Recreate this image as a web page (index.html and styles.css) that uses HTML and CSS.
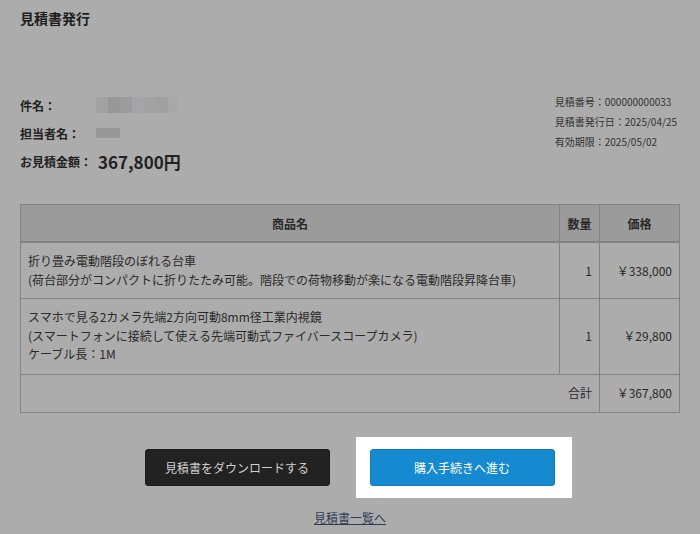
FILE: index.html
```html
<!DOCTYPE html>
<html lang="ja">
<head>
<meta charset="utf-8">
<link rel="stylesheet" href="styles.css">
</head>
<body>
<div class="page">
  <h1 class="title">見積書発行</h1>
  <div class="info">
    <div class="info-left">
      <div class="row"><span class="label">件名：</span><span class="mosaic m1"><i></i><i></i><i></i><i></i><i></i><i></i><i></i></span></div>
      <div class="row"><span class="label">担当者名：</span><span class="mosaic m2"><i></i><i></i></span></div>
      <div class="row"><span class="label">お見積金額：</span><span class="amount">367,800円</span></div>
    </div>
    <div class="info-right">
      <div>見積番号：000000000033</div>
      <div>見積書発行日：2025/04/25</div>
      <div>有効期限：2025/05/02</div>
    </div>
  </div>
  <table class="items">
    <thead>
      <tr><th class="c-name">商品名</th><th class="c-qty">数量</th><th class="c-price">価格</th></tr>
    </thead>
    <tbody>
      <tr class="r1">
        <td>折り畳み電動階段のぼれる台車<br>(荷台部分がコンパクトに折りたたみ可能。階段での荷物移動が楽になる電動階段昇降台車)</td>
        <td class="num">1</td>
        <td class="num">￥338,000</td>
      </tr>
      <tr class="r2">
        <td>スマホで見る2カメラ先端2方向可動8mm径工業内視鏡<br>(スマートフォンに接続して使える先端可動式ファイバースコープカメラ)<br>ケーブル長：1M</td>
        <td class="num">1</td>
        <td class="num">￥29,800</td>
      </tr>
      <tr class="total">
        <td colspan="2" class="num">合計</td>
        <td class="num">￥367,800</td>
      </tr>
    </tbody>
  </table>
  <div class="actions">
    <button class="btn btn-dark">見積書をダウンロードする</button>
    <div class="spot"><button class="btn btn-blue">購入手続きへ進む</button></div>
  </div>
  <div class="link-wrap"><a class="back" href="#">見積書一覧へ</a></div>
</div>
</body>
</html>
```
FILE: styles.css
```css
html, body {
  margin: 0;
  padding: 0;
  background: #acacac;
  font-family: "Noto Sans CJK JP", "Noto Sans", sans-serif;
  color: #222;
}
.page {
  padding: 8px 20px 0 20px;
}
.title {
  margin: 0;
  font-size: 14px;
  font-weight: bold;
  line-height: 20px;
  color: #1e1e1e;
}
.info {
  display: flex;
  justify-content: space-between;
  margin-top: 63px;
}
.info-left .row {
  display: flex;
  align-items: center;
  height: 28px;
  font-size: 12px;
  font-weight: bold;
}
.label {
  width: 78px;
}
.mosaic {
  display: flex;
  margin-left: -2px;
}
.mosaic i {
  display: block;
  width: 12px;
  height: 16px;
  background: #9e9e9e;
}
.m1 i:nth-child(1) { background: #a2a2a2; }
.m1 i:nth-child(2) { background: #979797; }
.m1 i:nth-child(3) { background: #9c9c9c; }
.m1 i:nth-child(4) { background: #a5a5a7; }
.m1 i:nth-child(5) { background: #a2a2a2; }
.m1 i:nth-child(6) { background: #a0a0a0; }
.m1 i:nth-child(7) { background: #a8a8a8; width: 10px; }
.m2 i { height: 10px; background: #979797; }
.amount {
  font-size: 17px;
  font-weight: bold;
}
.info-right {
  font-size: 10px;
  line-height: 20px;
  color: #333;
  margin-top: 1px;
  padding-right: 3px;
}
.items {
  width: 100%;
  margin-top: 29px;
  border-collapse: collapse;
  font-size: 12px;
  color: #2a2a2a;
}
.items th, .items td {
  border: 1px solid #838383;
}
.items th {
  background: #9b9b9b;
  height: 34px;
  padding: 1px;
  font-weight: bold;
  font-size: 12px;
  border-bottom: 2px solid #838383;
}
.c-qty { width: 37px; }
.c-price { width: 77px; }
.items td {
  padding: 8px 7px 9px;
  line-height: 19px;
  vertical-align: middle;
}
.r2 td { line-height: 18.5px; padding-top: 9px; padding-bottom: 10px; }
.items td.num { text-align: right; }
.total td { height: 20px; }
.actions {
  display: flex;
  justify-content: center;
  align-items: center;
  gap: 26px;
  margin-top: 24px;
  margin-left: 16px;
}
.spot {
  background: #fff;
  padding: 12px 17px 12px 14px;
}
.btn {
  width: 185px;
  height: 37px;
  border-radius: 3px;
  font-family: inherit;
  font-size: 12px;
  cursor: pointer;
}
.btn-dark {
  background: #222;
  border: 1px solid #1a1a1a;
  color: #cfcfcf;
}
.btn-blue {
  background: #168ad0;
  border: 1px solid #0f7abd;
  color: #fff;
}
.link-wrap {
  text-align: center;
  margin-top: 6px;
}
.back {
  font-size: 12px;
  color: #2f3c57;
}
```
